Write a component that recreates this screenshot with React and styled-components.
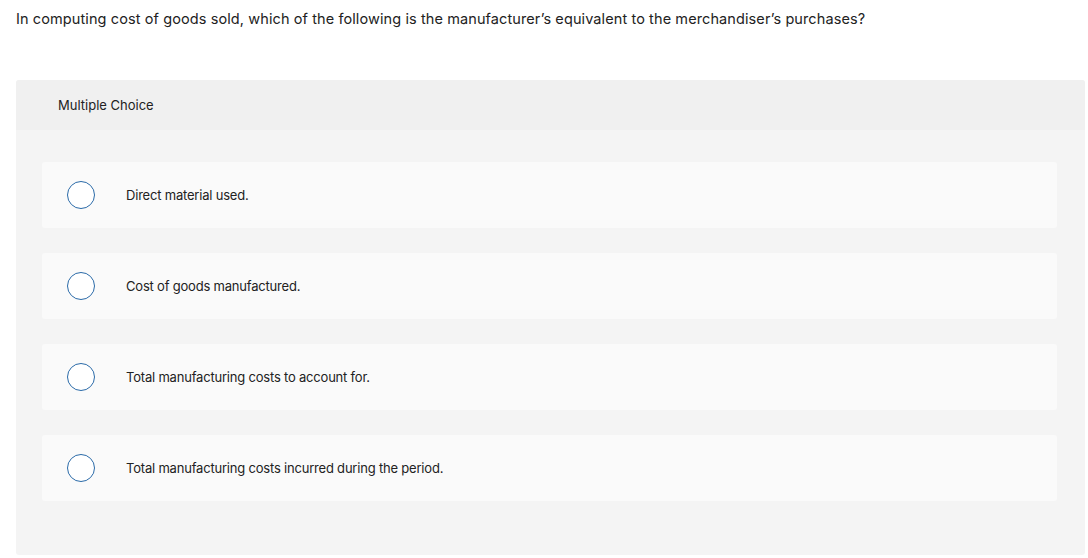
import React from "react";
import styled, { createGlobalStyle } from "styled-components";

const GlobalStyle = createGlobalStyle`
  html, body {
    margin: 0;
    padding: 0;
    background: #ffffff;
  }
  body {
    font-family: Inter, "Liberation Sans", sans-serif;
    color: #212121;
  }
`;

const Page = styled.main`
  width: 1088px;
  height: 558px;
  overflow: hidden;
  padding: 10px 3px 0 16px;
  box-sizing: border-box;
`;

const Question = styled.p`
  margin: 0;
  font-size: 14.5px;
  letter-spacing: 0.1px;
  line-height: 18px;
  color: #222222;
`;

const Panel = styled.section`
  margin-top: 52px;
  background: #f4f4f4;
  border-radius: 3px;
  overflow: hidden;
`;

const PanelHeader = styled.header`
  height: 50px;
  background: #f0f0f0;
  display: flex;
  align-items: center;
  padding-left: 42px;
  font-size: 13px;
  color: #222222;
`;

const Options = styled.div`
  display: flex;
  flex-direction: column;
  gap: 25px;
  padding: 32px 28px 54px 26px;
`;

const Option = styled.label`
  height: 66px;
  background: #fafafa;
  border-radius: 3px;
  display: flex;
  align-items: center;
  padding-left: 25px;
  cursor: pointer;
`;

const Radio = styled.span`
  width: 28px;
  height: 28px;
  box-sizing: border-box;
  border: 1.5px solid #2a6aa8;
  border-radius: 50%;
  background: #ffffff;
  flex: none;
`;

const OptionText = styled.span`
  margin-left: 31px;
  font-size: 13px;
  letter-spacing: -0.2px;
  color: #222222;
`;

const choices = [
  "Direct material used.",
  "Cost of goods manufactured.",
  "Total manufacturing costs to account for.",
  "Total manufacturing costs incurred during the period.",
];

export default function App() {
  return (
    <Page>
      <GlobalStyle />
      <Question>
        In computing cost of goods sold, which of the following is the manufacturer’s equivalent to the merchandiser’s purchases?
      </Question>
      <Panel>
        <PanelHeader>Multiple Choice</PanelHeader>
        <Options>
          {choices.map((c) => (
            <Option key={c}>
              <Radio />
              <OptionText>{c}</OptionText>
            </Option>
          ))}
        </Options>
      </Panel>
    </Page>
  );
}
